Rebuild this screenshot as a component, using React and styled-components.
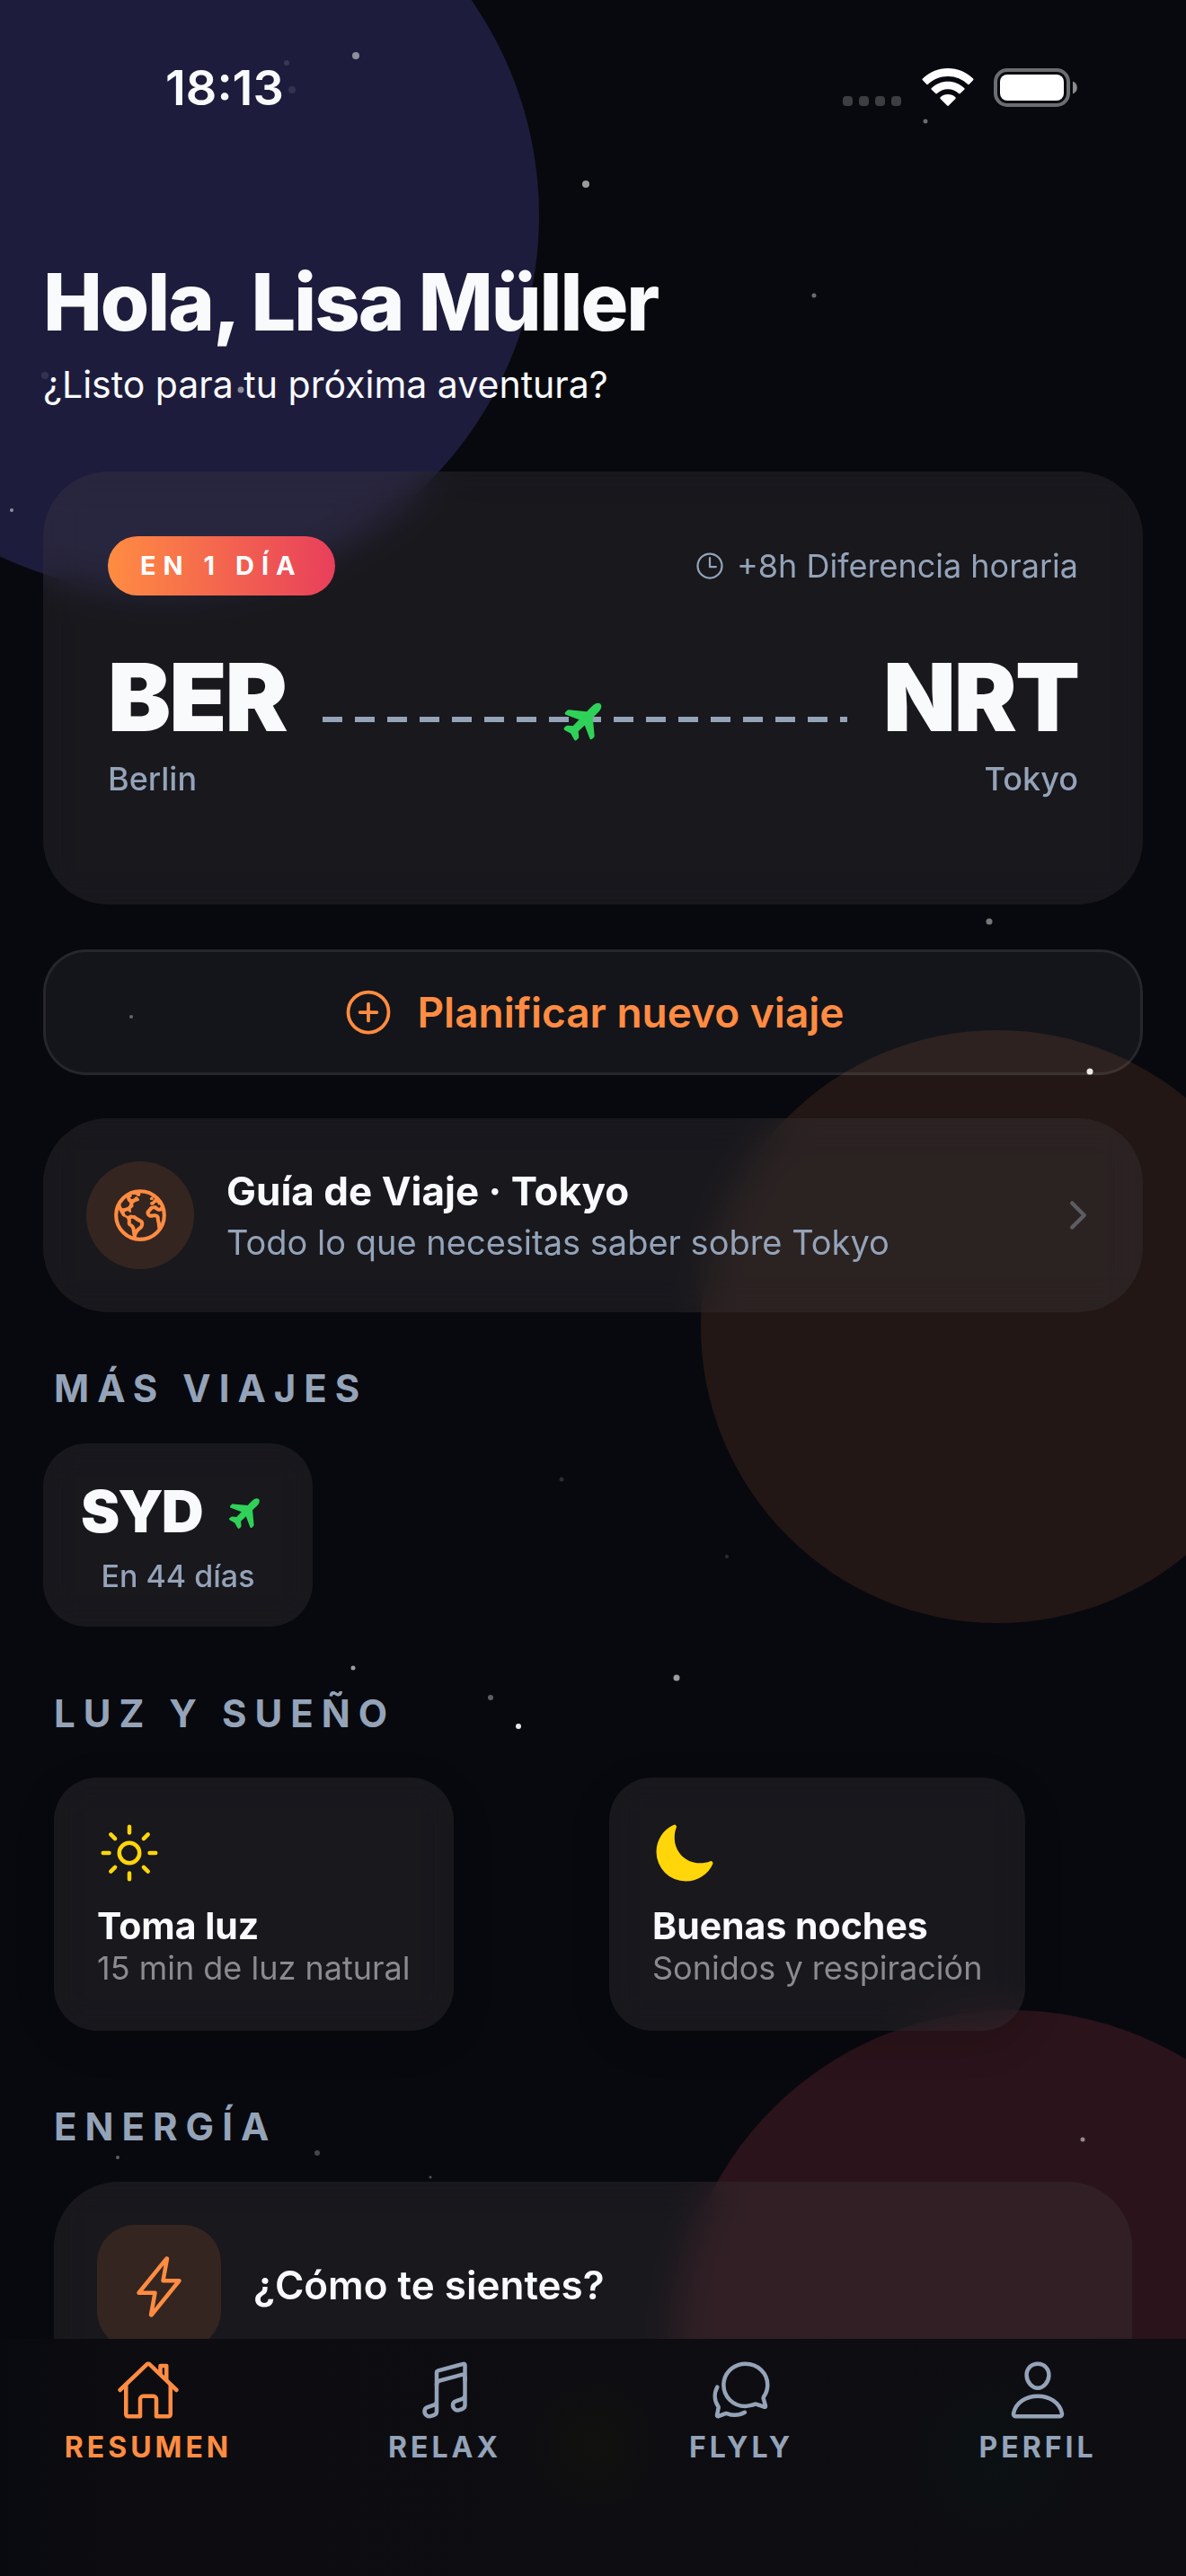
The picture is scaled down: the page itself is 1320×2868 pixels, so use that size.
import React from "react";
import styled, { createGlobalStyle, css } from "styled-components";
import {
  IoAddCircleOutline,
  IoAirplane,
  IoChatbubblesOutline,
  IoChevronForward,
  IoEarthOutline,
  IoFlashOutline,
  IoHomeOutline,
  IoMoon,
  IoMusicalNotesOutline,
  IoPersonOutline,
  IoSunnyOutline,
  IoTimeOutline,
} from "react-icons/io5";

const colors = {
  background: "#08090e",
  text: "#f8fafc",
  muted: "#94a3b8",
  dim: "#8b8b8e",
  accent: "#ff8c42",
  accentSoft: "rgba(255, 140, 66, 0.12)",
  green: "#30d158",
  yellow: "#ffd60a",
};

const GlobalStyle = createGlobalStyle`
  * {
    box-sizing: border-box;
  }

  body {
    margin: 0;
    background: ${colors.background};
    color: ${colors.text};
    font-family: Inter, "Liberation Sans", sans-serif;
  }

  h1, h2, h3, p {
    margin: 0;
  }

  button {
    font-family: inherit;
    color: inherit;
    cursor: pointer;
  }
`;

const glass = css`
  background: rgba(70, 66, 70, 0.28);
  backdrop-filter: blur(20px);
`;

const Page = styled.div`
  position: relative;
  min-height: 100vh;
  overflow: hidden;
`;

/* Background */

const Sky = styled.div`
  position: absolute;
  inset: 0;
  overflow: hidden;
  pointer-events: none;
`;

const Orb = styled.div`
  position: absolute;
  width: ${(props) => props.$size}px;
  height: ${(props) => props.$size}px;
  border-radius: 50%;
  background: ${(props) => props.$color};
`;

const IndigoOrb = styled(Orb)`
  top: -180px;
  left: -240px;
`;

const OrangeOrb = styled(Orb)`
  top: 40%;
  right: -120px;
`;

const RedOrb = styled(Orb)`
  bottom: -120px;
  right: -180px;
`;

const Stars = styled.svg`
  position: absolute;
  inset: 0;
  width: 100%;
  height: 100%;
`;

/* Status bar */

const StatusBar = styled.div`
  position: relative;
  display: flex;
  align-items: center;
  justify-content: space-between;
  padding: 60px 120px 0 184px;
`;

const Clock = styled.time`
  font-size: 54px;
  font-weight: 600;
  line-height: 75px;
`;

const StatusIcons = styled.div`
  display: flex;
  align-items: flex-end;
`;

const SignalDots = styled.div`
  display: flex;
  gap: 7px;
  padding-bottom: 1px;
  margin-right: 23px;

  span {
    width: 11px;
    height: 11px;
    border-radius: 4px;
    background: #3d3e42;
  }
`;

/* Content */

const Content = styled.main`
  position: relative;
  padding: 0 48px 39px;
`;

const Greeting = styled.header`
  padding: 148px 0 70px;
`;

const Hello = styled.h1`
  font-size: 88px;
  font-weight: 800;
  line-height: 106px;
  letter-spacing: -2px;
`;

const Tagline = styled.p`
  margin-top: 12px;
  font-size: 41px;
  line-height: 54px;
`;

const TripCard = styled.section`
  ${glass}
  padding: 72px 72px 118px;
  border-radius: 72px;
`;

const TripTop = styled.div`
  display: flex;
  align-items: center;
  justify-content: space-between;
`;

const Badge = styled.span`
  padding: 0 36px;
  border-radius: 33px;
  background: linear-gradient(90deg, #ff8c42, #e83f5b);
  color: #fff;
  font-size: 29px;
  font-weight: 700;
  line-height: 66px;
  letter-spacing: 8px;
`;

const TimeDifference = styled.span`
  display: flex;
  align-items: center;
  gap: 12px;
  color: ${colors.muted};
  font-size: 36px;
  line-height: 44px;
`;

const Route = styled.div`
  display: flex;
  align-items: center;
  gap: 40px;
  margin-top: 50px;
`;

const Airport = styled.div`
  text-align: ${(props) => props.$align || "left"};
`;

const AirportCode = styled.h2`
  font-size: 105px;
  font-weight: 900;
  line-height: 126px;
  letter-spacing: -2px;
`;

const AirportCity = styled.p`
  margin-top: 6px;
  color: ${colors.muted};
  font-size: 36px;
  font-weight: 500;
  line-height: 44px;
`;

const FlightPath = styled.div`
  display: flex;
  flex: 1;
  align-items: center;
  justify-content: center;
  background: repeating-linear-gradient(
      90deg,
      ${colors.muted} 0 22px,
      transparent 22px 36px
    )
    left center / 100% 6px no-repeat;
`;

const Plane = styled(IoAirplane)`
  color: ${colors.green};
  transform: rotate(-45deg);
`;

const PlanButton = styled.button`
  display: flex;
  align-items: center;
  justify-content: center;
  gap: 24px;
  width: 100%;
  height: 140px;
  margin-top: 50px;
  border: 3px solid rgba(255, 255, 255, 0.12);
  border-radius: 48px;
  background: rgba(255, 255, 255, 0.05);
  background-clip: padding-box;
  color: ${colors.accent};
  font-size: 46px;
  font-weight: 600;
`;

const GuideCard = styled.button`
  ${glass}
  display: flex;
  align-items: center;
  gap: 36px;
  width: 100%;
  margin-top: 48px;
  padding: 48px;
  border: 0;
  border-radius: 72px;
  text-align: left;
`;

const GuideIcon = styled.span`
  display: flex;
  align-items: center;
  justify-content: center;
  width: 120px;
  height: 120px;
  border-radius: 50%;
  background: ${colors.accentSoft};
  color: ${colors.accent};
`;

const GuideText = styled.span`
  display: flex;
  flex: 1;
  flex-direction: column;
  gap: 4px;
`;

const GuideTitle = styled.span`
  font-size: 44px;
  font-weight: 700;
  line-height: 56px;
`;

const GuideSubtitle = styled.span`
  color: ${colors.muted};
  font-size: 38px;
  line-height: 50px;
`;

const Section = styled.section`
  padding-top: ${(props) => props.$top}px;
`;

const SectionTitle = styled.h2`
  padding: 0 12px;
  margin-bottom: ${(props) => props.$gap || 36}px;
  color: ${colors.muted};
  font-size: 42px;
  font-weight: 700;
  line-height: 50px;
  letter-spacing: 9px;
`;

const SmallTrip = styled.button`
  ${glass}
  display: flex;
  flex-direction: column;
  gap: 12px;
  min-width: 300px;
  padding: 36px 42px;
  border: 0;
  border-radius: 48px;
`;

const SmallTripTop = styled.span`
  display: flex;
  align-items: center;
  gap: 28px;
  font-size: 65px;
  font-weight: 900;
  line-height: 80px;
  letter-spacing: -2px;
`;

const SmallTripDays = styled.span`
  align-self: center;
  color: ${colors.muted};
  font-size: 34px;
  font-weight: 500;
  line-height: 40px;
`;

const Tips = styled.div`
  display: grid;
  grid-template-columns: 1fr 1fr;
  gap: 36px;
  justify-items: start;
  padding: 0 12px;
`;

const Tip = styled.button`
  ${glass}
  display: flex;
  flex-direction: column;
  padding: 48px;
  border: 0;
  border-radius: 48px;
  box-shadow: 0 12px 48px rgba(0, 0, 0, 0.12);
  text-align: left;

  svg {
    color: ${colors.yellow};
  }
`;

const TipTitle = styled.span`
  margin-top: 20px;
  font-size: 41px;
  font-weight: 700;
  line-height: 50px;
`;

const TipText = styled.span`
  color: ${colors.dim};
  font-size: 36px;
  line-height: 44px;
`;

const EnergyCard = styled.div`
  ${glass}
  display: flex;
  align-items: flex-start;
  gap: 36px;
  min-height: 400px;
  margin: 0 12px;
  padding: 48px;
  border-radius: 72px;
`;

const EnergyIcon = styled.span`
  display: flex;
  align-items: center;
  justify-content: center;
  width: 138px;
  height: 138px;
  border-radius: 42px;
  background: ${colors.accentSoft};
  color: ${colors.accent};
`;

const EnergyTitle = styled.h3`
  font-size: 44px;
  font-weight: 600;
  line-height: 134px;
`;

/* Tab bar */

const TabBar = styled.nav`
  position: fixed;
  right: 0;
  bottom: 0;
  left: 0;
  display: grid;
  grid-template-columns: repeat(4, 1fr);
  height: 264px;
  padding-top: 21px;
  background: radial-gradient(circle at 50% 45%, #11110e, transparent 12%),
    radial-gradient(circle at 84% 50%, #0b1113, transparent 10%),
    linear-gradient(90deg, #090a0f, #0d0d11 12%, #0e0d12);
`;

const Tab = styled.a`
  display: flex;
  flex-direction: column;
  align-items: center;
  gap: 8px;
  color: ${(props) => (props.$active ? colors.accent : colors.muted)};
  font-size: 32px;
  font-weight: 700;
  line-height: 40px;
  letter-spacing: 4px;
  text-decoration: none;
`;

const stars = [
  { x: 396, y: 62, r: 4, o: 0.5 },
  { x: 319, y: 70, r: 3, o: 0.12 },
  { x: 325, y: 100, r: 4, o: 0.1 },
  { x: 652, y: 205, r: 4, o: 0.6 },
  { x: 1030, y: 135, r: 2.5, o: 0.4 },
  { x: 906, y: 329, r: 2.5, o: 0.4 },
  { x: 50, y: 418, r: 4, o: 0.1 },
  { x: 268, y: 434, r: 3.5, o: 0.5 },
  { x: 13, y: 568, r: 2, o: 0.5 },
  { x: 1101, y: 1026, r: 3.5, o: 0.45 },
  { x: 146, y: 1132, r: 2, o: 0.35 },
  { x: 1213, y: 1193, r: 3.5, o: 0.9 },
  { x: 625, y: 1647, r: 2.5, o: 0.15 },
  { x: 809, y: 1733, r: 2, o: 0.15 },
  { x: 393, y: 1857, r: 2.5, o: 0.6 },
  { x: 753, y: 1868, r: 3.5, o: 0.6 },
  { x: 546, y: 1890, r: 3, o: 0.35 },
  { x: 577, y: 1922, r: 3, o: 0.9 },
  { x: 353, y: 2397, r: 3, o: 0.25 },
  { x: 131, y: 2402, r: 2, o: 0.35 },
  { x: 1205, y: 2382, r: 2.5, o: 0.5 },
  { x: 479, y: 2424, r: 1.5, o: 0.3 },
];

const tips = [
  { title: "Toma luz", text: "15 min de luz natural", Icon: IoSunnyOutline },
  { title: "Buenas noches", text: "Sonidos y respiración", Icon: IoMoon },
];

const tabs = [
  { label: "RESUMEN", Icon: IoHomeOutline, active: true },
  { label: "RELAX", Icon: IoMusicalNotesOutline },
  { label: "FLYLY", Icon: IoChatbubblesOutline },
  { label: "PERFIL", Icon: IoPersonOutline },
];

const Background = () => (
  <Sky aria-hidden="true">
    <IndigoOrb $size={840} $color="#1e1c3c" />
    <OrangeOrb $size={660} $color="#221715" />
    <RedOrb $size={750} $color="#2a131a" />
    <Stars>
      {stars.map(({ x, y, r, o }, i) => (
        <circle
          key={i}
          cx={`${(x / 1320) * 100}%`}
          cy={`${(y / 2868) * 100}%`}
          r={r}
          fill="#fff"
          opacity={o}
        />
      ))}
    </Stars>
  </Sky>
);

const Status = () => (
  <StatusBar>
    <Clock>18:13</Clock>
    <StatusIcons>
      <SignalDots>
        <span />
        <span />
        <span />
        <span />
      </SignalDots>
      <svg width="58" height="43" viewBox="0 0 58 43" fill="#fff">
        <path d="M29 0c10.800 0 20.800 4.300 28.100 11.500.6.600.6 1.200 0 1.800l-4.300 4.400c-.6.600-1.200.600-1.800 0A31.300 31.300 0 0 0 29 8.900c-8.300 0-16.200 3.200-22 8.800-.6.600-1.200.600-1.800 0L.9 13.300c-.6-.6-.6-1.200 0-1.800C8.200 4.300 18.200 0 29 0z" />
        <path d="M29 14.700c7 0 13.400 2.700 18.200 7.300.6.600.6 1.200 0 1.800l-4.400 4.300c-.6.600-1.200.600-1.800 0a17.500 17.500 0 0 0-24 0c-.6.600-1.200.600-1.800 0l-4.400-4.300c-.6-.6-.6-1.200 0-1.800 4.800-4.600 11.200-7.300 18.200-7.300z" />
        <path d="M29 29c3.200 0 6.100 1.200 8.400 3.200.5.500.5 1.100 0 1.700l-7.500 7.600c-.6.600-1.200.600-1.800 0l-7.500-7.600c-.5-.6-.5-1.200 0-1.700A12.700 12.700 0 0 1 29 29z" />
      </svg>
      <svg width="116" height="43" viewBox="-22 0 116 43">
        <rect x="2" y="2" width="81" height="39" rx="13" fill="none" stroke="#6c6d71" strokeWidth="4" />
        <rect x="7" y="7" width="71" height="29" rx="8" fill="#fff" />
        <path d="M88 14.500a7.500 7.500 0 0 1 0 14z" fill="#8a8b8e" />
      </svg>
    </StatusIcons>
  </StatusBar>
);

const App = () => {
  return (
    <Page>
      <GlobalStyle />
      <Background />
      <Status />
      <Content>
        <Greeting>
          <Hello>Hola, Lisa Müller</Hello>
          <Tagline>¿Listo para tu próxima aventura?</Tagline>
        </Greeting>

        <TripCard>
          <TripTop>
            <Badge>EN 1 DÍA</Badge>
            <TimeDifference>
              <IoTimeOutline size={36} />
              +8h Diferencia horaria
            </TimeDifference>
          </TripTop>
          <Route>
            <Airport>
              <AirportCode>BER</AirportCode>
              <AirportCity>Berlin</AirportCity>
            </Airport>
            <FlightPath>
              <Plane size={52} />
            </FlightPath>
            <Airport $align="right">
              <AirportCode>NRT</AirportCode>
              <AirportCity>Tokyo</AirportCity>
            </Airport>
          </Route>
        </TripCard>

        <PlanButton type="button">
          <IoAddCircleOutline size={60} />
          Planificar nuevo viaje
        </PlanButton>

        <GuideCard type="button">
          <GuideIcon>
            <IoEarthOutline size={66} />
          </GuideIcon>
          <GuideText>
            <GuideTitle>Guía de Viaje · Tokyo</GuideTitle>
            <GuideSubtitle>Todo lo que necesitas saber sobre Tokyo</GuideSubtitle>
          </GuideText>
          <IoChevronForward size={48} color="#5c5d63" />
        </GuideCard>

        <Section $top={60}>
          <SectionTitle>MÁS VIAJES</SectionTitle>
          <SmallTrip type="button">
            <SmallTripTop>
              SYD
              <Plane size={42} />
            </SmallTripTop>
            <SmallTripDays>En 44 días</SmallTripDays>
          </SmallTrip>
        </Section>

        <Section $top={72}>
          <SectionTitle $gap={46}>LUZ Y SUEÑO</SectionTitle>
          <Tips>
            {tips.map(({ title, text, Icon }) => (
              <Tip type="button" key={title}>
                <Icon size={72} />
                <TipTitle>{title}</TipTitle>
                <TipText>{text}</TipText>
              </Tip>
            ))}
          </Tips>
        </Section>

        <Section $top={82}>
          <SectionTitle>ENERGÍA</SectionTitle>
          <EnergyCard>
            <EnergyIcon>
              <IoFlashOutline size={72} />
            </EnergyIcon>
            <EnergyTitle>¿Cómo te sientes?</EnergyTitle>
          </EnergyCard>
        </Section>
      </Content>

      <TabBar>
        {tabs.map(({ label, Icon, active }) => (
          <Tab href="#" key={label} $active={active}>
            <Icon size={72} />
            {label}
          </Tab>
        ))}
      </TabBar>
    </Page>
  );
};

export default App;
